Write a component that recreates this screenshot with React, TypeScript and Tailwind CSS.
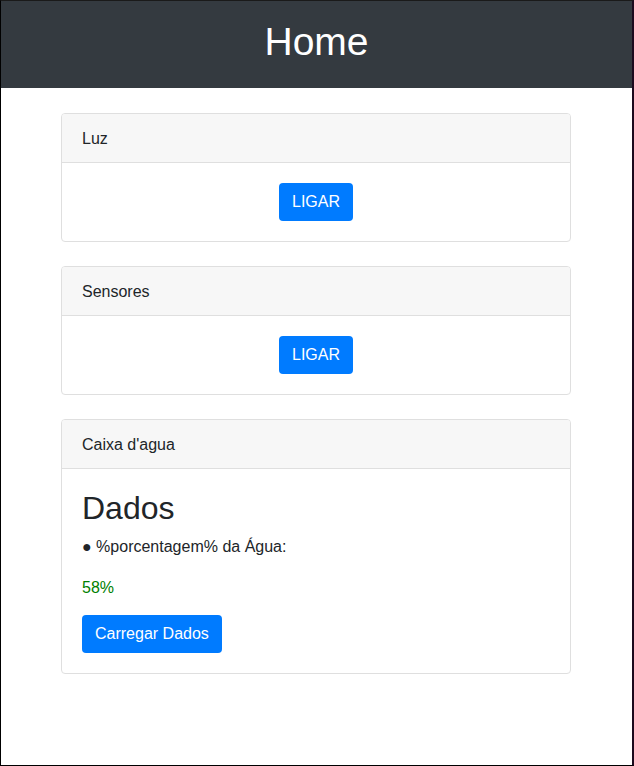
import React from "react";

function Card({ title, children }: { title: string; children: React.ReactNode }) {
  return (
    <div className="rounded-[4px] border border-[#dfdfdf] bg-white">
      <div className="h-[49px] border-b border-[#dfdfdf] bg-[#f7f7f7] px-[20px] pt-[13px] pb-[11px] text-[16px] leading-[24px] text-[#212529] rounded-t-[3px]">
        {title}
      </div>
      <div className="p-[20px]">{children}</div>
    </div>
  );
}

function Btn({ children }: { children: React.ReactNode }) {
  return (
    <button className="h-[38px] rounded-[4px] bg-[#007bff] px-[13px] text-[16px] leading-[24px] text-white">
      {children}
    </button>
  );
}

export default function App() {
  return (
    <div
      className="h-[766px] border-l border-t border-b border-r-2 border-l-black border-t-[#1a1a1a] border-b-black border-r-[#1c0a1e] bg-white text-[#212529]"
      style={{ fontFamily: '"Liberation Sans", Arial, sans-serif' }}
    >
      <div className="flex h-[87px] items-center justify-center bg-[#343a40] pb-[6px]">
        <h1 className="text-[39px] leading-[46px] text-white">Home</h1>
      </div>
      <div className="ml-[45px] w-[540px] px-[15px] pt-[25px]">
        <div className="flex flex-col gap-[24px]">
          <Card title="Luz">
            <div className="flex justify-center">
              <Btn>LIGAR</Btn>
            </div>
          </Card>
          <Card title="Sensores">
            <div className="flex justify-center">
              <Btn>LIGAR</Btn>
            </div>
          </Card>
          <Card title="Caixa d'agua">
            <h2 className="mb-[8px] text-[32px] leading-[38px]">Dados</h2>
            <p className="mb-[16px] text-[16px] leading-[24px]">● %porcentagem% da Água:</p>
            <p className="mb-[16px] pt-[1px] pb-[0px] text-[16px] leading-[23px] text-[#008000]">58%</p>
            <Btn>Carregar Dados</Btn>
          </Card>
        </div>
      </div>
    </div>
  );
}
